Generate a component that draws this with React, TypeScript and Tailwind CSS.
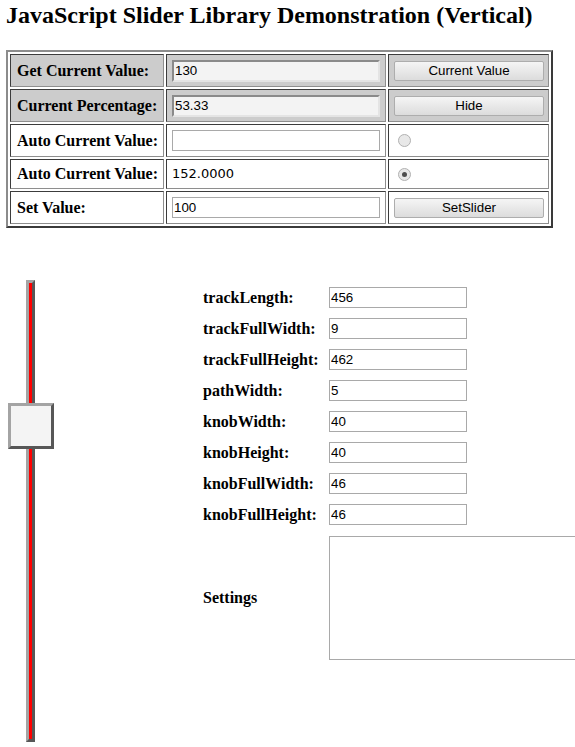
import React from "react";

const serif = { fontFamily: '"Liberation Serif", "Times New Roman", serif' };

function Label({ children }: { children: React.ReactNode }) {
  return (
    <span className="font-bold text-[16px] leading-[18px] text-black whitespace-nowrap" style={serif}>
      {children}
    </span>
  );
}

const cellBase =
  "flex items-center border border-t-[#3c3c3c] border-l-[#3c3c3c] border-r-[#8e8e8e] border-b-[#8e8e8e]";

function Cell({ children, gray, pl }: { children?: React.ReactNode; gray?: boolean; pl: string }) {
  return <div className={`${cellBase} ${gray ? "bg-[#cccccc]" : "bg-white"} ${pl}`}>{children}</div>;
}

function InsetInput({ value }: { value: string }) {
  return (
    <input
      readOnly
      value={value}
      className="w-[208px] h-[22px] border-2 border-t-[#8a8a8a] border-l-[#8a8a8a] border-r-[#e4e4e4] border-b-[#e4e4e4] bg-[#f3f3f3] pl-[1px] text-[13.33px] text-black outline-none"
      style={{ fontFamily: '"Liberation Sans", Arial, sans-serif' }}
    />
  );
}

function PlainInput({ value, w }: { value: string; w: string }) {
  return (
    <input
      readOnly
      value={value}
      className={`${w} h-[21px] border border-[#a9a9a9] bg-white pl-[1px] text-[13.33px] text-black outline-none`}
      style={{ fontFamily: '"Liberation Sans", Arial, sans-serif' }}
    />
  );
}

function Btn({ children }: { children: React.ReactNode }) {
  return (
    <div
      className="w-[150px] h-[20px] flex items-center justify-center border border-[#adadad] rounded-[2px] bg-linear-to-b from-[#f5f5f5] to-[#dcdcdc] text-[13.33px] text-black"
      style={{ fontFamily: '"Liberation Sans", Arial, sans-serif' }}
    >
      {children}
    </div>
  );
}

function Radio({ checked }: { checked?: boolean }) {
  return (
    <div className="w-[13px] h-[13px] rounded-full border border-[#b1b1b1] bg-[#e8e8e8] flex items-center justify-center">
      {checked && <div className="w-[5px] h-[5px] rounded-full bg-[#4e4e4e]" />}
    </div>
  );
}

const params: [string, string][] = [
  ["trackLength:", "456"],
  ["trackFullWidth:", "9"],
  ["trackFullHeight:", "462"],
  ["pathWidth:", "5"],
  ["knobWidth:", "40"],
  ["knobHeight:", "40"],
  ["knobFullWidth:", "46"],
  ["knobFullHeight:", "46"],
];

export default function App() {
  return (
    <div className="w-full h-[747px] overflow-hidden bg-white pl-[6px]">
      <h2 className="pt-[1px] text-[24px] leading-[28px] font-bold text-black whitespace-nowrap" style={serif}>
        JavaScript Slider Library Demonstration (Vertical)
      </h2>

      <div className="mt-[21px] w-[547px] border-2 border-t-[#8c8c8c] border-l-[#8c8c8c] border-r-[#3a3a3a] border-b-[#3a3a3a] p-[2px] grid grid-cols-[154px_220px_161px] grid-rows-[33px_33px_33px_30px_33px] gap-[2px]">
        <Cell gray pl="pl-[6px]"><Label>Get Current Value:</Label></Cell>
        <Cell gray pl="pl-[5px]"><InsetInput value="130" /></Cell>
        <Cell gray pl="pl-[5px]"><Btn>Current Value</Btn></Cell>

        <Cell gray pl="pl-[6px]"><Label>Current Percentage:</Label></Cell>
        <Cell gray pl="pl-[5px]"><InsetInput value="53.33" /></Cell>
        <Cell gray pl="pl-[5px]"><Btn>Hide</Btn></Cell>

        <Cell pl="pl-[6px]"><Label>Auto Current Value:</Label></Cell>
        <Cell pl="pl-[5px]"><PlainInput value="" w="w-[208px]" /></Cell>
        <Cell pl="pl-[9px]"><Radio /></Cell>

        <Cell pl="pl-[6px]"><Label>Auto Current Value:</Label></Cell>
        <Cell pl="pl-[5px]">
          <span className="text-[13px] text-black" style={{ fontFamily: '"DejaVu Sans", Verdana, sans-serif' }}>
            152.0000
          </span>
        </Cell>
        <Cell pl="pl-[9px]"><Radio checked /></Cell>

        <Cell pl="pl-[6px]"><Label>Set Value:</Label></Cell>
        <Cell pl="pl-[5px]"><PlainInput value="100" w="w-[208px]" /></Cell>
        <Cell pl="pl-[5px]"><Btn>SetSlider</Btn></Cell>
      </div>

      <div className="mt-[52px] flex items-start">
        <div className="relative ml-[2px] w-[46px] h-[462px] shrink-0">
          <div className="absolute left-[18px] top-0 w-[9px] h-[462px] border-[3px] border-t-[#a4a4a4] border-l-[#a4a4a4] border-r-[#575757] border-b-[#575757] bg-[#ff0000]" />
          <div className="absolute left-0 top-[123px] w-[46px] h-[46px] border-[3px] border-t-[#a4a4a4] border-l-[#a4a4a4] border-r-[#575757] border-b-[#575757] bg-[#f4f4f4]" />
        </div>

        <div className="ml-[149px] mt-[2px] shrink-0 grid grid-cols-[126px_auto]">
          {params.map(([k, v]) => (
            <React.Fragment key={k}>
              <div className="h-[31px] flex items-center"><Label>{k}</Label></div>
              <div className="h-[31px] flex items-center"><PlainInput value={v} w="w-[138px]" /></div>
            </React.Fragment>
          ))}
          <div className="h-[135px] flex items-center"><Label>Settings</Label></div>
          <div className="h-[135px] flex items-center">
            <textarea
              readOnly
              className="w-[400px] h-[124px] shrink-0 border border-[#a9a9a9] bg-white resize-none outline-none"
            />
          </div>
        </div>
      </div>
    </div>
  );
}
